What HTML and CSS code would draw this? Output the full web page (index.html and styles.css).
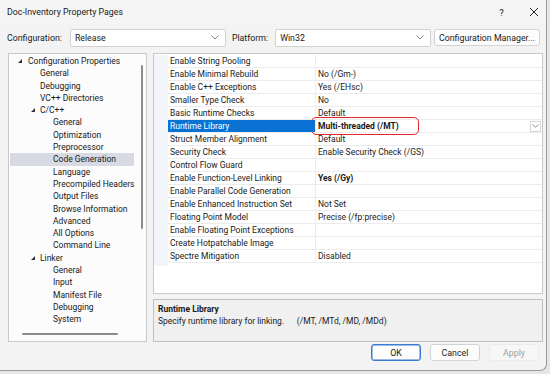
FILE: index.html
```html
<!DOCTYPE html>
<html>
<head>
<meta charset="utf-8">
<link rel="stylesheet" href="styles.css">
</head>
<body>
<div class="dialog">
  <div class="titlebar">
    <span class="title">Doc-Inventory Property Pages</span>
    <span class="tbtn help">?</span>
    <span class="tbtn close">
      <svg width="10" height="10" viewBox="0 0 10 10"><path d="M1 1L9 9M9 1L1 9" stroke="#222" stroke-width="1"/></svg>
    </span>
  </div>
  <div class="toolbar">
    <span class="lbl">Configuration:</span>
    <div class="combo c1"><span>Release</span><svg width="8" height="5" viewBox="0 0 8 5"><path d="M0.5 0.5L4 4L7.5 0.5" fill="none" stroke="#666" stroke-width="0.8"/></svg></div>
    <span class="lbl plat">Platform:</span>
    <div class="combo c2"><span>Win32</span><svg width="8" height="5" viewBox="0 0 8 5"><path d="M0.5 0.5L4 4L7.5 0.5" fill="none" stroke="#666" stroke-width="0.8"/></svg></div>
    <div class="btn cm">Configuration Manager...</div>
  </div>
  <div class="main">
    <div class="tree">
      <div class="tree-body">
        <ul class="items">
          <li class="l0"><span class="tri"></span>Configuration Properties</li>
          <li class="l1">General</li>
          <li class="l1">Debugging</li>
          <li class="l1">VC++ Directories</li>
          <li class="l1 exp"><span class="tri"></span>C/C++</li>
          <li class="l2">General</li>
          <li class="l2">Optimization</li>
          <li class="l2">Preprocessor</li>
          <li class="l2 sel">Code Generation</li>
          <li class="l2">Language</li>
          <li class="l2">Precompiled Headers</li>
          <li class="l2">Output Files</li>
          <li class="l2">Browse Information</li>
          <li class="l2">Advanced</li>
          <li class="l2">All Options</li>
          <li class="l2">Command Line</li>
          <li class="l1 exp"><span class="tri"></span>Linker</li>
          <li class="l2">General</li>
          <li class="l2">Input</li>
          <li class="l2">Manifest File</li>
          <li class="l2">Debugging</li>
          <li class="l2">System</li>
        </ul>
        <div class="vscroll"><div class="vthumb"></div></div>
      </div>
      <div class="hscroll"><div class="hthumb"></div></div>
    </div>
    <div class="right">
      <div class="grid">
        <div class="gutter"></div>
        <div class="rows">
          <div class="row"><div class="k">Enable String Pooling</div><div class="v"></div></div>
          <div class="row"><div class="k">Enable Minimal Rebuild</div><div class="v">No (/Gm-)</div></div>
          <div class="row"><div class="k">Enable C++ Exceptions</div><div class="v">Yes (/EHsc)</div></div>
          <div class="row"><div class="k">Smaller Type Check</div><div class="v">No</div></div>
          <div class="row"><div class="k">Basic Runtime Checks</div><div class="v">Default</div></div>
          <div class="row selrow"><div class="k">Runtime Library</div><div class="v"><b class="hl">Multi-threaded (/MT)</b><span class="ddb"><svg width="7" height="4" viewBox="0 0 7 4"><path d="M0.5 0.5L3.5 3.3L6.5 0.5" fill="none" stroke="#777" stroke-width="0.8"/></svg></span></div></div>
          <div class="row"><div class="k">Struct Member Alignment</div><div class="v">Default</div></div>
          <div class="row"><div class="k">Security Check</div><div class="v">Enable Security Check (/GS)</div></div>
          <div class="row"><div class="k">Control Flow Guard</div><div class="v"></div></div>
          <div class="row"><div class="k">Enable Function-Level Linking</div><div class="v"><b>Yes (/Gy)</b></div></div>
          <div class="row"><div class="k">Enable Parallel Code Generation</div><div class="v"></div></div>
          <div class="row"><div class="k">Enable Enhanced Instruction Set</div><div class="v">Not Set</div></div>
          <div class="row"><div class="k">Floating Point Model</div><div class="v">Precise (/fp:precise)</div></div>
          <div class="row"><div class="k">Enable Floating Point Exceptions</div><div class="v"></div></div>
          <div class="row"><div class="k">Create Hotpatchable Image</div><div class="v"></div></div>
          <div class="row"><div class="k">Spectre Mitigation</div><div class="v">Disabled</div></div>
        </div>
      </div>
      <div class="desc">
        <div class="dtitle">Runtime Library</div>
        <div class="dtext">Specify runtime library for linking.&nbsp;&nbsp;&nbsp;&nbsp;&nbsp;&nbsp;(/MT, /MTd, /MD, /MDd)</div>
      </div>
    </div>
  </div>
  <div class="footer">
    <div class="btn ok">OK</div>
    <div class="btn">Cancel</div>
    <div class="btn dis">Apply</div>
  </div>
</div>
</body>
</html>
```
FILE: styles.css
```css
* { box-sizing: border-box; }
html, body { margin: 0; padding: 0; }
body {
  width: 550px; height: 374px; overflow: hidden;
  background: #e6e6e6;
  font-family: Roboto, "Noto Sans", sans-serif;
  font-size: 8.5px;
  color: #1a1a1a;
}
.dialog {
  width: 547px; height: 371px;
  background: #f3f3f3;
  border-right: 1px solid #9a9a9a;
  border-bottom: 1px solid #9a9a9a;
  border-bottom-right-radius: 7px;
  display: flex; flex-direction: column;
}
.titlebar {
  height: 24px; display: flex; align-items: center;
  padding-left: 7px; background: #f5f5f5;
}
.title { flex: 1; font-size: 8.8px; }
.tbtn { width: 31px; display: flex; justify-content: center; align-items: center; font-size: 9.5px; }
.help { margin-right: 5px; }
.close { width: 24px; }
.toolbar {
  height: 26px; display: flex; align-items: center; padding-left: 7px; padding-top: 1px;
}
.lbl { font-size: 8.8px; }
.combo {
  height: 18px; background: #fff; border: 1px solid #d0d0d0; border-radius: 2px;
  display: flex; align-items: center; justify-content: space-between;
  padding: 0 6px 0 4px; font-size: 8.8px;
}
.c1 { width: 156px; margin-left: 8px; }
.plat { margin-left: 6px; }
.c2 { width: 156px; margin-left: 7px; }
.btn {
  height: 17px; background: #fdfdfd; border: 1px solid #d3d3d3; border-radius: 3px;
  display: flex; align-items: center; justify-content: center; font-size: 8.8px;
}
.cm { width: 106px; margin-left: auto; margin-right: 6px; }
.main {
  flex: 1; display: flex; padding: 3px 0 0 8px; gap: 6px; min-height: 0;
}
.tree {
  width: 139px; height: 289px; background: #fcfcfc; border: 1px solid #c9c9c9;
  display: flex; flex-direction: column;
}
.tree-body { flex: 1; display: flex; min-height: 0; }
.items { list-style: none; margin: 0; padding: 0 0 0 1px; flex: 1; }
.items li {
  height: 12.3px; line-height: 12.3px; white-space: nowrap; position: relative;
}
.l0 { padding-left: 18px; }
.l1 { padding-left: 30px; }
.l1.exp { padding-left: 21px; }
.l2 { padding-left: 43px; }
.sel { background: #d8dae3; margin-right: 4px; }
.tri {
  display: inline-block; width: 0; height: 0; margin-right: 5px; vertical-align: 1px;
  border-left: 4px solid transparent; border-bottom: 4px solid #333;
}
.l0 .tri { margin-left: -10px; margin-right: 6px; }
.items li:first-child { margin-top: 1px; }
.vscroll { width: 8px; padding-top: 11px; display: flex; justify-content: center; }
.vthumb { width: 2px; height: 164px; background: #8c8c8c; border-radius: 1px; }
.hscroll { height: 14px; display: flex; align-items: center; padding-left: 13px; padding-bottom: 1px; }
.hthumb { width: 96px; height: 2px; background: #8c8c8c; border-radius: 1px; }
.right { width: 390px; display: flex; flex-direction: column; gap: 5px; }
.grid {
  height: 243px; background: #fff; border: 1px solid #c9c9c9; display: flex;
  padding-top: 1px;
}
.gutter { width: 14px; background: #f2f5fa; height: 211px; }
.rows { flex: 1; }
.row { height: 13px; display: flex; border-bottom: 1px solid #ececec; }
.k { width: 148px; padding-left: 2px; line-height: 12px; white-space: nowrap; border-right: 1px solid #ececec; }
.v { flex: 1; padding-left: 2px; line-height: 12px; white-space: nowrap; display: flex; justify-content: space-between; align-items: center; position: relative; }
.selrow .k { background: #0a72d2; color: #fff; }
b { font-weight: 700; }
.hl { position: relative; }
.hl::after {
  content: ""; position: absolute; left: -7px; top: -3px; width: 106px; height: 16px;
  border: 1.6px solid #e3262a; border-radius: 5px;
}
.ddb {
  width: 11px; height: 11px; border: 1px solid #d7d7d7; background: #fff; margin-right: 1px;
  display: flex; align-items: center; justify-content: center;
}
.desc {
  height: 43px; background: #f0f0f0; border: 1px solid #c0c0c0; padding: 3px 4px;
}
.dtitle { font-weight: 700; line-height: 12px; }
.dtext { line-height: 13px; }
.footer {
  height: 28px; display: flex; justify-content: flex-end; gap: 9px; padding: 2px 7px 0 0;
}
.footer .btn { width: 50px; height: 17px; }
.ok { border: 1px solid #3b7bd0; box-shadow: inset 0 0 0 0.5px #3b7bd0; }
.dis { color: #a0a0a0; background: #f7f7f7; border-color: #ececec; }
```
